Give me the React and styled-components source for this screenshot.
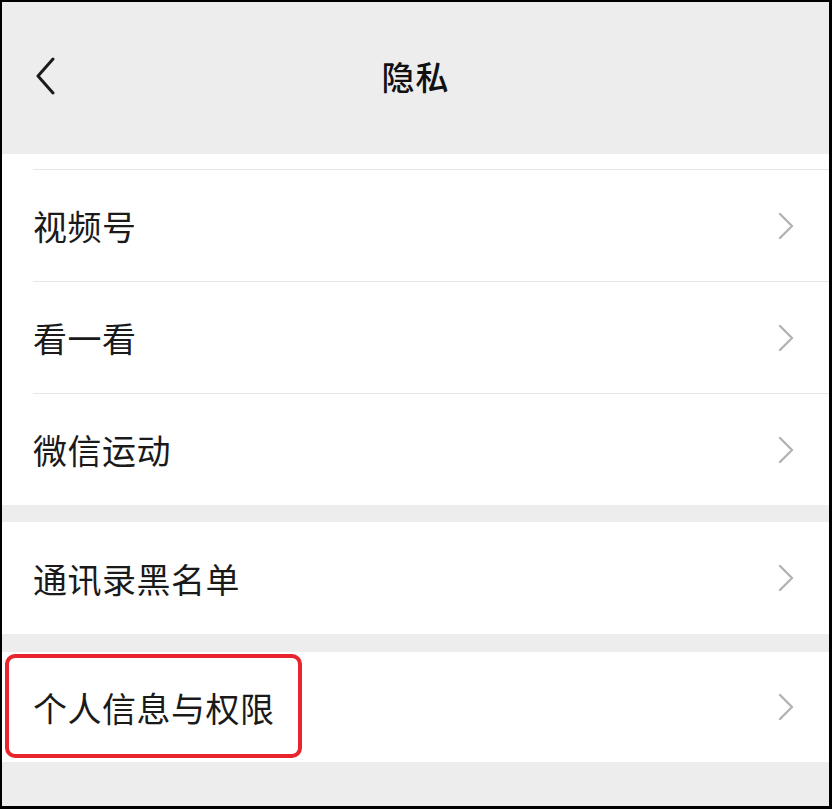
import React from 'react';
import styled, { createGlobalStyle } from 'styled-components';

const GlobalStyle = createGlobalStyle`
  html, body {
    margin: 0;
    padding: 0;
    background: #000;
  }
  body {
    font-family: "Noto Sans CJK SC", "Noto Sans", sans-serif;
  }
`;

const Frame = styled.div`
  box-sizing: border-box;
  width: 832px;
  height: 809px;
  border: 2px solid #000;
  border-right-width: 3px;
  border-bottom-width: 3px;
  background: #ededed;
  overflow: hidden;
`;

const NavBar = styled.header`
  height: 152px;
  display: grid;
  grid-template-columns: 1fr auto 1fr;
  align-items: center;
  padding-bottom: 4px;
  box-sizing: border-box;
`;

const BackButton = styled.button`
  justify-self: start;
  margin-left: 32px;
  padding: 0;
  border: none;
  background: none;
  display: flex;
  align-items: center;
`;

const Title = styled.h1`
  margin: 0;
  font-size: 33px;
  font-weight: 500;
  color: #111;
  letter-spacing: 1px;
`;

const Section = styled.section`
  position: relative;
  background: #fff;
  padding-top: ${p => p.$top || 0}px;
  margin-bottom: ${p => p.$gap || 0}px;
`;

const Row = styled.div`
  padding-left: 31px;
`;

const RowInner = styled.div`
  height: ${p => p.$height || 111}px;
  border-top: ${p => (p.$divider ? '1px solid #e6e6e6' : 'none')};
  display: flex;
  align-items: center;
  justify-content: space-between;
  padding-right: 34px;
`;

const Label = styled.span`
  font-size: 34px;
  color: #1a1a1a;
  letter-spacing: 0.5px;
`;

const Highlight = styled.div`
  position: absolute;
  left: 3px;
  top: 2px;
  width: 297px;
  height: 104px;
  box-sizing: border-box;
  border: 4px solid #e8252c;
  border-radius: 10px;
  pointer-events: none;
`;

const Chevron = () => (
  <svg width="18" height="28" viewBox="0 0 18 28">
    <path d="M3 2 L15 14 L3 26" fill="none" stroke="#b3b3b3" strokeWidth="2.4" strokeLinecap="round" strokeLinejoin="round" />
  </svg>
);

const BackIcon = () => (
  <svg width="22" height="38" viewBox="0 0 22 38">
    <path d="M19 2 L4 19 L19 36" fill="none" stroke="#1a1a1a" strokeWidth="3" strokeLinecap="round" strokeLinejoin="round" />
  </svg>
);

function Item({ label, divider, height }) {
  return (
    <Row>
      <RowInner $divider={divider} $height={height}>
        <Label>{label}</Label>
        <Chevron />
      </RowInner>
    </Row>
  );
}

export default function App() {
  return (
    <>
      <GlobalStyle />
      <Frame>
        <NavBar>
          <BackButton aria-label="返回">
            <BackIcon />
          </BackButton>
          <Title>隐私</Title>
          <span />
        </NavBar>

        <Section $top={15} $gap={17}>
          <Item label="视频号" divider />
          <Item label="看一看" divider />
          <Item label="微信运动" divider height={111} />
        </Section>

        <Section $gap={18}>
          <Item label="通讯录黑名单" height={112} />
        </Section>

        <Section>
          <Item label="个人信息与权限" height={110} />
          <Highlight />
        </Section>
      </Frame>
    </>
  );
}
